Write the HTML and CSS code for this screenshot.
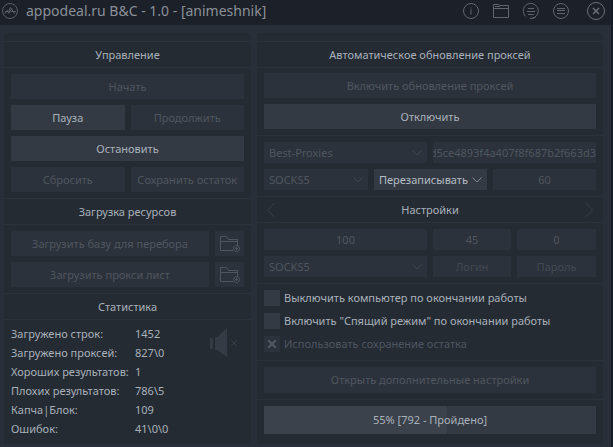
FILE: index.html
```html
<!DOCTYPE html>
<html lang="ru">
<head>
<meta charset="utf-8">
<title>appodeal.ru B&amp;C</title>
<link rel="stylesheet" href="styles.css">
</head>
<body>
<div class="window">
  <header class="titlebar">
    <svg class="logo" width="18" height="18" viewBox="0 0 18 18" aria-hidden="true"><circle cx="9" cy="9" r="7.5"/><path d="M4 11.5l2-3 1.5 1L9.500 5.500l4 6M4 9.500h3M10 9.500h5M8 11.500l1-2M11 6.500l-4 5"/></svg>
    <h1 class="title">appodeal.ru B&amp;C - 1.0 - [animeshnik]</h1>
    <nav class="tools">
      <button class="tool" aria-label="Информация"><svg width="18" height="18" viewBox="0 0 18 18"><circle cx="9" cy="9" r="7.500"/><path d="M9 7.500v5M9 5.500v1"/></svg></button>
      <button class="tool" aria-label="Папка"><svg width="18" height="18" viewBox="0 0 18 18"><path d="M1.500 15.500v-13h5l1.500 1h8.500v12zM1.500 6.500h15M3 4.500h5"/></svg></button>
      <button class="tool" aria-label="Журнал"><svg width="18" height="18" viewBox="0 0 18 18"><path d="M3.500 14.300A7.500 7.500 0 1 1 8 16.400M10 16.400a7.500 7.500 0 0 0 4-1.800M6 6.500h6M5 9.500h8M6 12.500h6"/></svg></button>
      <button class="tool" aria-label="Меню"><svg width="18" height="18" viewBox="0 0 18 18"><circle cx="9" cy="9" r="7.500"/><path d="M5 6.500h8M5 8.500h8M5 11.500h8"/></svg></button>
      <button class="tool tool-close" aria-label="Закрыть"><svg width="20" height="20" viewBox="0 0 20 20"><circle cx="10" cy="10" r="8.500"/><path class="cross" d="M7 7l6 6M13 7l-6 6"/></svg></button>
    </nav>
  </header>

  <main class="panels">
    <div class="panel">
      <h2 class="heading">Управление</h2>
      <section class="group grid control">
        <button class="btn wide" disabled>Начать</button>
        <button class="btn">Пауза</button>
        <button class="btn" disabled>Продолжить</button>
        <button class="btn wide">Остановить</button>
        <button class="btn" disabled>Сбросить</button>
        <button class="btn" disabled>Сохранить остаток</button>
      </section>
      <h2 class="heading">Загрузка ресурсов</h2>
      <section class="group grid load">
        <button class="btn" disabled>Загрузить базу для перебора</button>
        <button class="btn" disabled aria-label="Выбрать базу"><svg width="22" height="18" viewBox="0 0 22 18"><path d="M14 15.500H1.500v-14h6l2 3h9V11M1.500 6.500h17"/><circle cx="17.500" cy="13.500" r="3"/><path d="M16 13.500h3M17.500 12v3"/></svg></button>
        <button class="btn" disabled>Загрузить прокси лист</button>
        <button class="btn" disabled aria-label="Выбрать прокси"><svg width="22" height="18" viewBox="0 0 22 18"><path d="M14 15.500H1.500v-14h6l2 3h9V11M1.500 6.500h17"/><circle cx="17.500" cy="13.500" r="3"/><path d="M16 13.500h3M17.500 12v3"/></svg></button>
      </section>
      <h2 class="heading">Статистика</h2>
      <section class="group stats">
        <table class="table">
          <tr><th scope="row">Загружено строк:</th><td>1452</td></tr>
          <tr><th scope="row">Загружено проксей:</th><td>827\0</td></tr>
          <tr><th scope="row">Хороших результатов:</th><td>1</td></tr>
          <tr><th scope="row">Плохих результатов:</th><td>786\5</td></tr>
          <tr><th scope="row">Капча|Блок:</th><td>109</td></tr>
          <tr><th scope="row">Ошибок:</th><td>41\0\0</td></tr>
        </table>
        <button class="sound" aria-label="Звук"><svg width="30" height="30" viewBox="0 0 30 30"><path class="solid" d="M1 10h3v11H1zM6 9h2l10-9v29L8 22H6z"/><path d="M22 12l6 6M28 12l-6 6"/></svg></button>
      </section>
    </div>

    <div class="panel">
      <h2 class="heading">Автоматическое обновление проксей</h2>
      <section class="group grid updates">
        <button class="btn" disabled>Включить обновление проксей</button>
        <button class="btn">Отключить</button>
      </section>
      <section class="group grid source">
        <div class="select double"><select disabled aria-label="Источник"><option>Best-Proxies</option></select><svg width="10" height="6" viewBox="0 0 10 6"><path d="M0.500 0.500l4.500 4.500 4.500-4.500"/></svg></div>
        <input class="field key double" disabled aria-label="Ключ" value="0d5ce4893f4a407f8f687b2f663d3">
        <div class="select"><select disabled aria-label="Тип прокси"><option>SOCKS5</option></select><svg width="10" height="6" viewBox="0 0 10 6"><path d="M0.500 0.500l4.500 4.500 4.500-4.500"/></svg></div>
        <div class="select active double"><select aria-label="Режим"><option>Перезаписывать</option></select><svg width="10" height="6" viewBox="0 0 10 6"><path d="M0.500 0.500l4.500 4.500 4.500-4.500"/></svg></div>
        <input class="field" disabled aria-label="Интервал" value="60">
      </section>
      <div class="heading switcher">
        <button class="arrow" aria-label="Назад"><svg width="10" height="16" viewBox="0 0 10 16"><path d="M8.500 1L1.500 8l7 7"/></svg></button>
        <h2 class="caption">Настройки</h2>
        <button class="arrow" aria-label="Вперёд"><svg width="10" height="16" viewBox="0 0 10 16"><path d="M1.500 1l7 7-7 7"/></svg></button>
      </div>
      <section class="group grid settings">
        <input class="field" disabled aria-label="Потоки" value="100">
        <input class="field" disabled aria-label="Таймаут" value="45">
        <input class="field" disabled aria-label="Пауза" value="0">
        <div class="select"><select disabled aria-label="Прокси"><option>SOCKS5</option></select><svg width="10" height="6" viewBox="0 0 10 6"><path d="M0.500 0.500l4.500 4.500 4.500-4.500"/></svg></div>
        <input class="field" disabled aria-label="Логин" placeholder="Логин">
        <input class="field" disabled aria-label="Пароль" placeholder="Пароль">
      </section>
      <section class="group options">
        <label class="check"><input type="checkbox">Выключить компьютер по окончании работы</label>
        <label class="check"><input type="checkbox">Включить "Спящий режим" по окончании работы</label>
        <label class="check off"><input type="checkbox" checked disabled>Использовать сохранение остатка</label>
      </section>
      <section class="group grid">
        <button class="btn more" disabled>Открыть дополнительные настройки</button>
      </section>
      <section class="group">
        <div class="meter">
          <progress id="done" max="100" value="55"></progress>
          <label class="meter-text" for="done">55% [792 - Пройдено]</label>
        </div>
      </section>
    </div>
  </main>
</div>
</body>
</html>
```

FILE: styles.css
```css
* {
  box-sizing: border-box;
}

body {
  --frame: #282f38;
  --panel: #242b33;
  --line: #2b323b;
  --raised: #343a44;
  --text: #a9b1ba;
  --dim: #4f5660;
  margin: 0;
  background: #141c26;
  color: var(--text);
  font: 11px/16px "Noto Sans", "Open Sans", sans-serif;
}

h1, h2 {
  margin: 0;
  font-weight: 400;
}

button, input, select {
  margin: 0;
  padding: 0;
  border: 0;
  border-radius: 0;
  background: none;
  color: inherit;
  font: inherit;
}

svg {
  display: block;
  fill: none;
  stroke: currentColor;
}

.window {
  min-height: 100vh;
  margin-right: 2px;
  background: var(--frame);
}

.titlebar {
  display: flex;
  align-items: center;
  height: 25px;
  padding: 0 5px 4px 1px;
  background: #1b2029;
  color: #8b9098;
}

.logo {
  color: #595e67;
}

.title {
  flex: 1;
  margin-left: 7px;
  font-size: 14px;
  line-height: 20px;
}

.tools {
  display: flex;
  align-items: center;
  gap: 12px;
  color: #60656d;
}

.tool-close {
  margin-left: 4px;
  color: #6b7078;
}

.cross {
  stroke-width: 1.5;
}

.panels {
  display: grid;
  grid-template-columns: 247fr 346fr;
  gap: 6px;
  padding: 8px 8px 6px 4px;
}

.panel {
  padding-top: 8px;
  background: var(--panel);
}

.heading {
  height: 26px;
  border-top: 1px solid var(--line);
  font-size: 11px;
  line-height: 25px;
  text-align: center;
}

.group {
  padding: 6px 7px;
  border-top: 1px solid var(--line);
}

.grid {
  display: grid;
  gap: 6px;
}

.control {
  grid-template-columns: 1fr 1fr;
}

.wide {
  grid-column: 1 / -1;
}

.load {
  grid-template-columns: 1fr 29px;
}

.updates {
  padding-top: 5px;
}

.source {
  grid-template-columns: 104fr 53fr 54fr 103fr;
}

.double {
  grid-column: span 2;
}

.settings {
  grid-template-columns: 163fr 78fr 79fr;
}

.btn {
  display: flex;
  align-items: center;
  justify-content: center;
  height: 25px;
  background: var(--raised);
  white-space: nowrap;
}

.btn:disabled {
  background: var(--line);
  color: var(--dim);
}

.more {
  height: 26px;
}

.field {
  width: 100%;
  min-width: 0;
  height: 21px;
  background: var(--line);
  color: var(--dim);
  text-align: center;
}

.field::placeholder {
  color: #424953;
}

.key {
  direction: rtl;
  text-align: right;
}

.select {
  position: relative;
  min-width: 0;
  height: 21px;
  background: var(--line);
  color: var(--dim);
}

.select select {
  appearance: none;
  width: 100%;
  height: 100%;
  padding-left: 5px;
  opacity: 1;
}

.select svg {
  position: absolute;
  top: 8px;
  right: 5px;
  opacity: 0.6;
  pointer-events: none;
}

.active {
  background: var(--raised);
  color: #b4bcc5;
}

.switcher {
  display: flex;
  align-items: center;
  justify-content: space-between;
  padding: 0 9px;
}

.caption {
  font-size: 11px;
}

.arrow {
  color: #39404a;
}

.stats {
  display: flex;
  align-items: flex-start;
  justify-content: space-between;
  padding-top: 4px;
}

.table {
  border-spacing: 0;
}

.table th, .table td {
  height: 19px;
  padding: 0;
  font-weight: 400;
  text-align: left;
  white-space: nowrap;
}

.table th {
  width: 124px;
}

.sound {
  margin-top: 4px;
  margin-right: 5px;
  color: #343b45;
}

.solid {
  fill: currentColor;
  stroke: none;
}

.options {
  display: grid;
  gap: 7px;
  padding-bottom: 8px;
}

.check {
  display: flex;
  align-items: center;
  gap: 4px;
}

.check input {
  appearance: none;
  width: 16px;
  height: 16px;
  background: var(--raised);
}

.off {
  color: var(--dim);
}

.off input {
  display: grid;
  place-items: center;
  background: var(--line);
}

.off input::before {
  content: "";
  width: 8px;
  height: 8px;
  background:
    linear-gradient(45deg, transparent 42%, currentColor 42% 58%, transparent 58%),
    linear-gradient(-45deg, transparent 42%, currentColor 42% 58%, transparent 58%);
}

.meter {
  position: relative;
  margin-bottom: 1px;
}

.meter progress {
  display: block;
  appearance: none;
  width: 100%;
  height: 28px;
  border: 0;
  background: var(--raised);
}

.meter progress::-webkit-progress-bar {
  background: var(--raised);
}

.meter progress::-webkit-progress-value {
  background: #3b424b;
}

.meter-text {
  position: absolute;
  inset: 0;
  line-height: 28px;
  text-align: center;
}
```
